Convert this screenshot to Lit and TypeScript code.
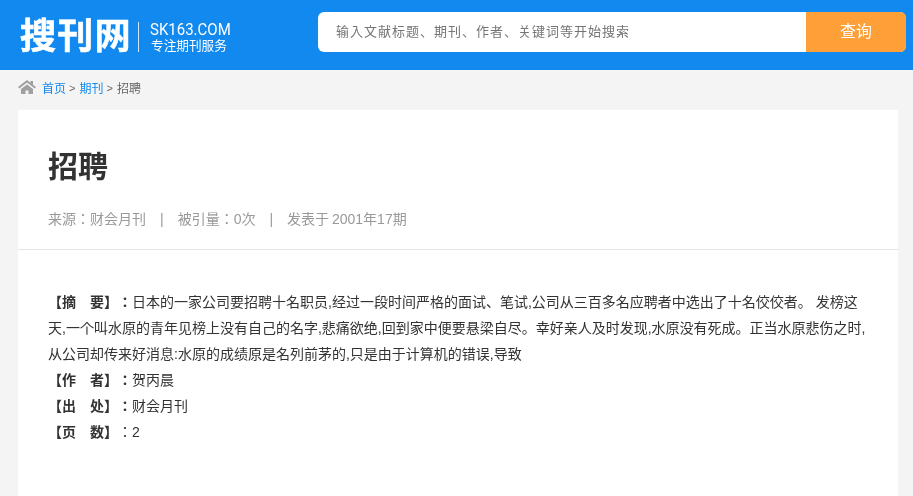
import { LitElement, html, css } from 'lit';
import { customElement } from 'lit/decorators.js';

@customElement('app-root')
export class AppRoot extends LitElement {
  static styles = css`
    :host {
      display: block;
      height: 496px;
      overflow: hidden;
      background: #f4f4f4;
      font-family: "Liberation Sans", "Noto Sans CJK JP", sans-serif;
      color: #333;
      text-spacing-trim: space-all;
      will-change: transform;
    }
    .header {
      height: 70px;
      background: #1289ee;
      display: flex;
      align-items: flex-start;
      padding: 12px 7px 0 20px;
      box-sizing: border-box;
    }
    .logo {
      width: 298px;
      height: 50px;
      display: flex;
      align-items: center;
      color: #fff;
      flex: none;
    }
    .logo-name {
      font-size: 36px;
      font-weight: 700;
      line-height: 46px;
      letter-spacing: 1.3px;
      -webkit-text-stroke: 0.5px #fff;
      width: 118px;
      white-space: nowrap;
    }
    .logo-side {
      border-left: 1px solid #cfe6fb;
      height: 30px;
      padding-left: 11px;
      display: flex;
      flex-direction: column;
      justify-content: center;
    }
    .logo-domain {
      font-family: Roboto, sans-serif;
      font-size: 15px;
      line-height: 17px;
      white-space: nowrap;
      transform: translateY(-1px) scaleY(1.15);
    }
    .logo-slogan {
      font-size: 12.67px;
      line-height: 14px;
      padding-left: 1px;
      white-space: nowrap;
    }
    .search {
      flex: 1;
      height: 40px;
      display: flex;
      background: #fff;
      border-radius: 6px;
    }
    .search-text {
      flex: 1;
      padding-left: 18px;
      font-size: 13px;
      letter-spacing: 1px;
      line-height: 40px;
      color: #757575;
    }
    .search-btn {
      width: 100px;
      background: #ff9f38;
      border-radius: 0 6px 6px 0;
      color: #fff;
      font-size: 16px;
      line-height: 40px;
      text-align: center;
    }
    .crumbs {
      height: 35px;
      padding-left: 18px;
      padding-bottom: 5px;
      display: flex;
      align-items: center;
      font-size: 12px;
      color: #666;
    }
    .crumbs svg {
      width: 18px;
      height: 14px;
      margin-right: 6px;
      margin-top: -1px;
    }
    .crumbs a {
      color: #1289ee;
      text-decoration: none;
    }
    .crumbs .sep {
      margin: 0 3px;
      font-size: 11px;
      width: 7.5px;
    }
    .card {
      margin: 0 15px 0 18px;
      background: #fff;
      height: 386px;
    }
    .head {
      padding: 36px 30px 0;
      height: 103px;
      border-bottom: 1px solid #e5e5e5;
    }
    h1 {
      margin: 0;
      font-size: 30px;
      font-weight: 700;
      line-height: 42px;
    }
    .meta {
      margin-top: 20px;
      font-size: 14px;
      line-height: 22px;
      color: #999;
      white-space: nowrap;
      word-spacing: -1px;
    }
    .meta .bar {
      padding: 0 14px;
    }
    .body {
      padding: 39px 30px 0;
      font-size: 14px;
      line-height: 26px;
    }
    .body p {
      margin: 0;
    }
    .body b {
      font-weight: 700;
    }
  `;

  render() {
    return html`
      <div class="header">
        <div class="logo">
          <div class="logo-name">搜刊网</div>
          <div class="logo-side">
            <div class="logo-domain">SK163.COM</div>
            <div class="logo-slogan">专注期刊服务</div>
          </div>
        </div>
        <div class="search">
          <div class="search-text">输入文献标题、期刊、作者、关键词等开始搜索</div>
          <div class="search-btn">查询</div>
        </div>
      </div>
      <div class="crumbs">
        <svg viewBox="0 0 18 14"><path fill="#a0a0a0" d="M9 0 0 7l1.200 1.400L9 2.400l7.800 6L18 7l-3-2.300V1h-2.600v1.700zM3 9v5h4.500v-3.500h3V14H15V9L9 4.400z"/></svg>
        <a href="#">首页</a><span class="sep">&gt;</span><a href="#">期刊</a><span class="sep">&gt;</span><span>招聘</span>
      </div>
      <div class="card">
        <div class="head">
          <h1>招聘</h1>
          <div class="meta">来源：财会月刊<span class="bar">|</span>被引量：0次<span class="bar">|</span>发表于 2001年17期</div>
        </div>
        <div class="body">
          <p><b>【摘　要】：</b>日本的一家公司要招聘十名职员,经过一段时间严格的面试、笔试,公司从三百多名应聘者中选出了十名佼佼者。 发榜这天,一个叫水原的青年见榜上没有自己的名字,悲痛欲绝,回到家中便要悬梁自尽。幸好亲人及时发现,水原没有死成。正当水原悲伤之时,从公司却传来好消息:水原的成绩原是名列前茅的,只是由于计算机的错误,导致</p>
          <p><b>【作　者】：</b>贺丙晨</p>
          <p><b>【出　处】：</b>财会月刊</p>
          <p><b>【页　数】</b>：2</p>
        </div>
      </div>
    `;
  }
}
